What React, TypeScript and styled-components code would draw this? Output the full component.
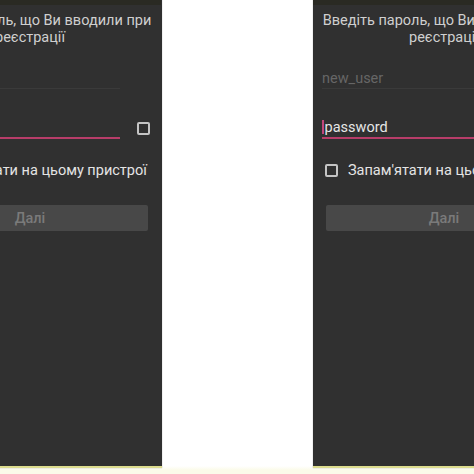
import React from 'react';
import styled, { createGlobalStyle } from 'styled-components';

const Global = createGlobalStyle`
    html, body {
        margin: 0;
        padding: 0;
        background: #ffffff;
    }
    body {
        font-family: Roboto, "Noto Sans", sans-serif;
    }
`

const Page = styled.div`
    width: 474px;
    height: 474px;
    display: flex;
    justify-content: space-between;
    align-items: flex-start;
    overflow: hidden;
    background: linear-gradient(#ffffff 0, #ffffff 466px, #fbfbe9 470px);
`

const Frame = styled.div<{ $w: number }>`
    width: ${p => p.$w}px;
    height: 466px;
    overflow: hidden;
    background: #303030;
    border-bottom: 2px solid #dcdc8e;
    box-shadow: 0 0 1px rgba(0,0,0,.35);
    flex-shrink: 0;
`

const Screen = styled.div<{ $shift: number }>`
    width: 262px;
    margin-left: ${p => p.$shift}px;
    display: flex;
    flex-direction: column;
    font-size: 14.5px;
`

const StatusEdge = styled.div`
    height: 5px;
    background: #2a2a23;
`

const Title = styled.div`
    margin-top: 7px;
    font-size: 14.5px;
    line-height: 17px;
    color: #cfcfcf;
    text-align: center;
    white-space: nowrap;
`

const Field = styled.div<{ $active?: boolean }>`
    width: 212px;
    margin-left: 9px;
    height: 20px;
    display: flex;
    align-items: center;
    color: ${p => p.$active ? '#e6e6e6' : '#666'};
    border-bottom: ${p => p.$active ? '2px solid #b83d69' : '1px solid #3a3a3a'};
`

const Cursor = styled.span`
    width: 1.5px;
    height: 14px;
    background: #c2457a;
    margin-right: 1px;
`

const PassRow = styled.div`
    margin-top: 28px;
    display: flex;
    align-items: flex-end;
`

const Box = styled.span`
    width: 9px;
    height: 9px;
    border: 2px solid #c4c4c4;
    border-radius: 2px;
    flex-shrink: 0;
`

const ToggleBox = styled(Box)`
    margin: 0 0 4px 17px;
`

const Remember = styled.label`
    margin-top: 23px;
    padding-left: 12px;
    display: flex;
    align-items: center;
    gap: 10px;
    color: #e4e4e4;
    white-space: nowrap;
`

const Next = styled.div`
    margin: 26px 13px 0;
    height: 26px;
    border-radius: 2px;
    background: #484848;
    color: #7a7a7a;
    font-weight: 500;
    display: flex;
    align-items: center;
    justify-content: center;
`

const LoginScreen: React.FC<{ shift: number }> = ({ shift }) => (
    <Screen $shift={shift}>
        <StatusEdge />
        <Title>Введіть пароль, що Ви вводили при<br />реєстрації</Title>
        <Field style={{ marginTop: 22 }}>new_user</Field>
        <PassRow>
            <Field $active><Cursor />password</Field>
            <ToggleBox />
        </PassRow>
        <Remember><Box />Запам'ятати на цьому пристрої</Remember>
        <Next>Далі</Next>
    </Screen>
)

const App: React.FC = () => {
    return (
        <>
        <Global />
        <Page>
            <Frame $w={162}><LoginScreen shift={-101} /></Frame>
            <Frame $w={161}><LoginScreen shift={0} /></Frame>
        </Page>
        </>
    );
}

export default App;
